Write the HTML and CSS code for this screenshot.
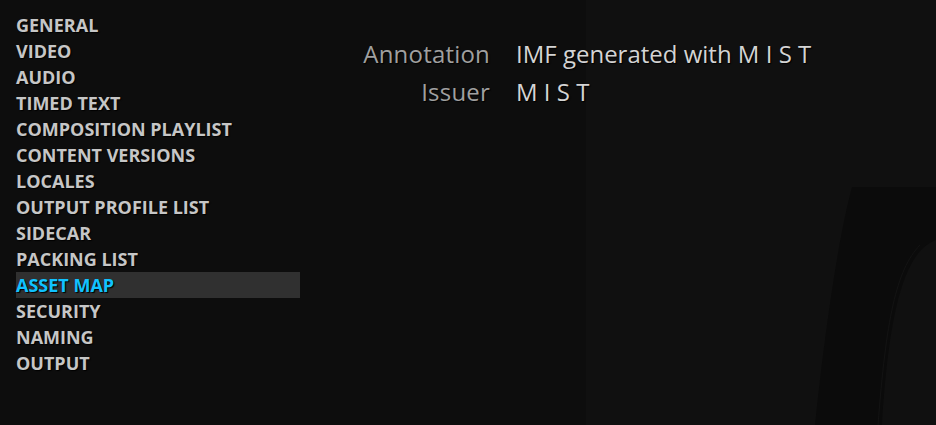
FILE: index.html
```html
<!DOCTYPE html>
<html lang="en">
<head>
<meta charset="utf-8">
<title>Asset Map</title>
<link rel="stylesheet" href="styles.css">
</head>
<body>
<div class="screen">
  <div class="backdrop">
    <svg class="backdrop-art" width="936" height="425" viewBox="0 0 936 425">
      <rect x="586" y="0" width="350" height="425" fill="#101010"/>
      <path d="M852 187 L936 187 L936 240 C910 250 890 290 882 425 L815 425 C825 330 838 240 852 187 Z" fill="#0b0b0b"/>
      <path d="M878 425 C886 320 896 270 920 245" stroke="#131313" stroke-width="1" fill="none"/>
    </svg>
  </div>
  <nav class="menu">
    <div class="menu-item">GENERAL</div>
    <div class="menu-item">VIDEO</div>
    <div class="menu-item">AUDIO</div>
    <div class="menu-item">TIMED TEXT</div>
    <div class="menu-item">COMPOSITION PLAYLIST</div>
    <div class="menu-item">CONTENT VERSIONS</div>
    <div class="menu-item">LOCALES</div>
    <div class="menu-item">OUTPUT PROFILE LIST</div>
    <div class="menu-item">SIDECAR</div>
    <div class="menu-item">PACKING LIST</div>
    <div class="menu-item active">ASSET MAP</div>
    <div class="menu-item">SECURITY</div>
    <div class="menu-item">NAMING</div>
    <div class="menu-item">OUTPUT</div>
  </nav>
  <main class="details">
    <div class="row">
      <div class="label">Annotation</div>
      <div class="value">IMF generated with M I S T</div>
    </div>
    <div class="row">
      <div class="label">Issuer</div>
      <div class="value">M I S T</div>
    </div>
  </main>
</div>
</body>
</html>
```

FILE: styles.css
```css
html, body {
  margin: 0;
  padding: 0;
  background: #0d0d0d;
}
.screen {
  position: relative;
  width: 936px;
  height: 425px;
  overflow: hidden;
  display: flex;
  font-family: "Open Sans", "Noto Sans", sans-serif;
}
.backdrop {
  position: absolute;
  inset: 0;
  z-index: 0;
}
.backdrop-art {
  display: block;
}
.menu {
  position: relative;
  z-index: 1;
  display: flex;
  flex-direction: column;
  padding: 12px 0 0 16px;
  width: 284px;
}
.menu-item {
  height: 26px;
  line-height: 27px;
  font-size: 18px;
  font-weight: 700;
  color: #c6c6c6;
  white-space: nowrap;
  text-shadow: 1px 1px 1px #000;
}
.menu-item.active {
  background: #303030;
  color: #10c2ff;
}
.details {
  position: relative;
  z-index: 1;
  display: grid;
  grid-template-columns: 190px auto;
  column-gap: 26px;
  align-content: start;
  padding-top: 38px;
  row-gap: 6px;
}
.row {
  display: contents;
}
.label {
  text-align: right;
  font-size: 24px;
  line-height: 32px;
  color: #a0a0a0;
  letter-spacing: 0.2px;
  text-shadow: 1px 1px 1px #000;
}
.value {
  font-size: 24px;
  line-height: 32px;
  color: #d4d4d4;
  text-shadow: 1px 1px 1px #000;
}
```
